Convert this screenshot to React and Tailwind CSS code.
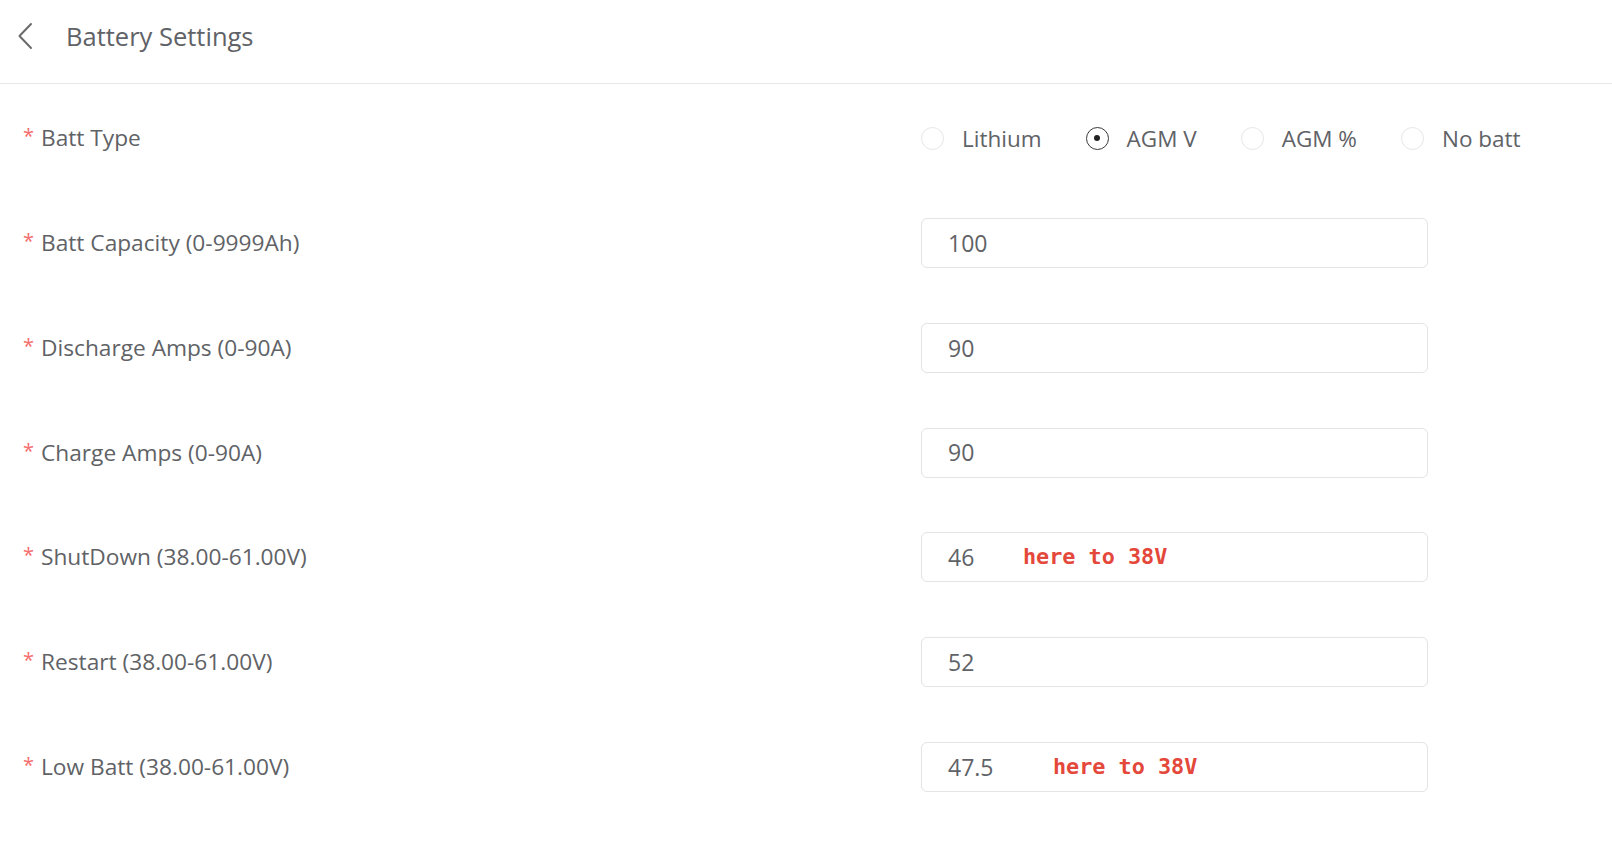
import React from "react";

const rows = [
  { label: "Batt Capacity (0-9999Ah)", value: "100" },
  { label: "Discharge Amps (0-90A)", value: "90" },
  { label: "Charge Amps (0-90A)", value: "90" },
  { label: "ShutDown (38.00-61.00V)", value: "46", note: "here to 38V", noteLeft: "left-[101px]" },
  { label: "Restart (38.00-61.00V)", value: "52" },
  { label: "Low Batt (38.00-61.00V)", value: "47.5", note: "here to 38V", noteLeft: "left-[131px]" },
];

function Label({ children }) {
  return (
    <div className="w-[921px] shrink-0 pl-[23px] flex items-center text-[22.7px] text-[#606266]">
      <span className="text-[#f56c6c] text-[20px] mr-[7px] relative top-[-2px]">*</span>
      <span>{children}</span>
    </div>
  );
}

function Radio({ checked, label }) {
  return (
    <div className="flex items-center">
      {checked ? (
        <span className="w-[23px] h-[23px] rounded-full border-[1.5px] border-[#3a3a3a] flex items-center justify-center">
          <span className="w-[6px] h-[6px] rounded-full bg-[#222]" />
        </span>
      ) : (
        <span className="w-[23px] h-[23px] rounded-full border border-[#e6e6e6]" />
      )}
      <span className="ml-[18px] text-[22.5px] text-[#606266]">{label}</span>
    </div>
  );
}

export default function App() {
  return (
    <div className="w-[1612px] h-[842px] bg-white font-['Open_Sans',sans-serif] overflow-hidden">
      <div className="h-[84px] border-b border-[#e8e8e8] flex items-center pl-[17px]">
        <svg width="16" height="28" viewBox="0 0 16 28" fill="none" className="relative top-[-6px]">
          <path d="M14 2 L2.5 14 L14 26" stroke="#6b6b6b" strokeWidth="2" strokeLinecap="round" strokeLinejoin="round" />
        </svg>
        <span className="ml-[33px] text-[25.5px] text-[#5f6266] relative top-[-5px]">Battery Settings</span>
      </div>
      <div className="pt-[2px]">
        <div className="h-[104.75px] flex items-center">
          <Label>Batt Type</Label>
          <div className="flex items-center gap-[44px]">
            <Radio label="Lithium" />
            <Radio checked label="AGM V" />
            <Radio label="AGM %" />
            <Radio label="No batt" />
          </div>
        </div>
        {rows.map((r) => (
          <div key={r.label} className="h-[104.75px] flex items-center">
            <Label>{r.label}</Label>
            <div className="relative w-[507px] h-[50px] border border-[#e4e4e4] rounded-[6px] pl-[26px] flex items-center text-[23px] text-[#5f6266] shadow-[0_0_1px_rgba(0,0,0,0.06)]">
              <span>{r.value}</span>
              {r.note && (
                <span className={`absolute ${r.noteLeft} top-1/2 -translate-y-1/2 font-['DejaVu_Sans_Mono',monospace] font-bold text-[21.8px] text-[#e4483a]`}>
                  {r.note}
                </span>
              )}
            </div>
          </div>
        ))}
      </div>
    </div>
  );
}
